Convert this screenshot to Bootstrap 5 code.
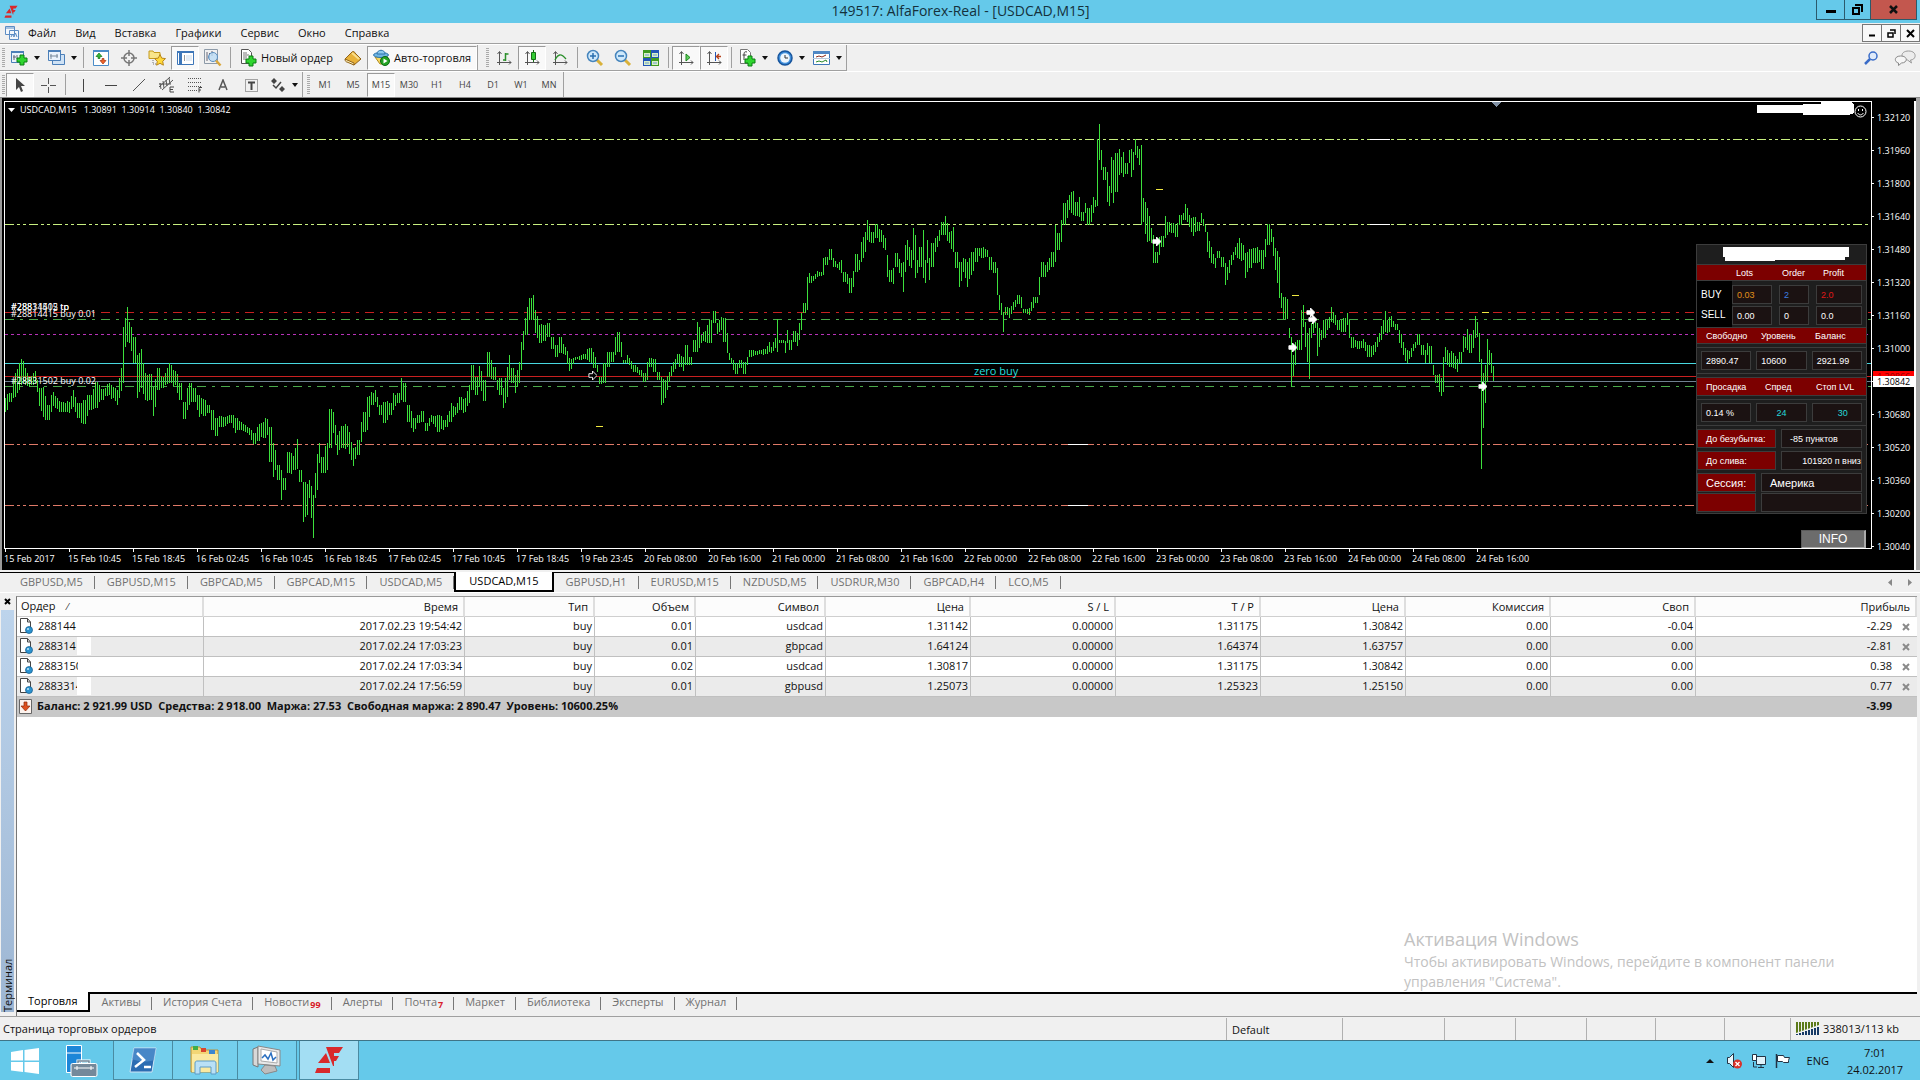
<!DOCTYPE html>
<html lang="ru">
<head>
<meta charset="utf-8">
<meta name="viewport" content="width=device-width, initial-scale=1">
<title>149517: AlfaForex-Real - [USDCAD,M15]</title>
<link rel="stylesheet" href="https://cdn.jsdelivr.net/npm/bootstrap@5.3.0/dist/css/bootstrap.min.css">
<style>
:root{--ui:#f0f0f0;--line:#a0a0a0;--sky:#65c9ea}
body{font-family:"Open Sans","Noto Sans",sans-serif;font-size:11px;line-height:16px;color:#111;background:var(--ui)}
button{font-family:inherit;padding:0;border:0;background:none;color:inherit}
a{color:inherit;text-decoration:none}
svg{display:block;flex:none}
/* title and menu */
.titlebar{background:var(--sky);height:23px;padding:0 3px 0 4px}
.titlebar h1{font-size:14px;line-height:22px;font-weight:400;margin:0;color:#14313c}
.tside{flex:1}
.winbtns button{height:20px;border:1px solid #2b5a6c;border-top:0;margin-left:-1px;display:flex;align-items:center;justify-content:center}
.winbtns .w-min{width:29px}.winbtns .w-max{width:27px}.winbtns .w-close{width:47px;background:#c3574e}
.menubar{height:21px;border-bottom:1px solid var(--line);padding-left:4px}
.menubar .nav-link{padding:0;margin-right:19px;color:#111;line-height:20px}
.mdi button{width:20px;height:18px;border:1px solid #777;background:#f8f8f8;margin-left:-1px;display:flex;align-items:center;justify-content:center}
/* toolbars */
.toolrow{height:27px;border-top:1px solid #fff}
.toolrow.second{border-bottom:1px solid #8b8b8b}
.tgroup{display:flex;align-items:center;height:26px;border-right:1px solid var(--line);border-bottom:1px solid var(--line)}
.second .tgroup{border-bottom:0;height:25px}
.grip{width:3px;height:19px;margin:0 1px 0 2px;background:repeating-linear-gradient(#aaa 0 1px,transparent 1px 2px)}
.tb{width:28px;height:24px;display:flex;align-items:center;justify-content:center;border:1px solid transparent;color:#444}
.tb.drop{width:37px;gap:6px}
.tb.wide{width:auto;padding:0 5px;gap:4px;color:#111}
.tb.on{background:#f9f9f9;border-color:#9a9a9a #fff #fff #9a9a9a}
.tf .tb{font-size:9px}
.caret{width:0;height:0;border:3px solid transparent;border-top:4px solid #111;border-bottom:0}
.tsep{width:1px;height:21px;background:var(--line);margin:0 3px}
/* chart */
.chart{background:#000;color:#fff;font-size:9px;line-height:12px;border-left:2px solid #9a9a9a;border-right:4px solid #a8a8a8;padding:3px 0 0 2px}
.chartinner{border-right:2px solid #fff}
.plot{border:1px solid #fff;overflow:hidden;flex:1}
.plot>svg{position:absolute;left:0;top:0;width:100%;height:100%}
.timeaxis{height:21px;overflow:hidden}
.timeaxis span{flex:0 0 64px;position:relative;padding-top:4px;white-space:nowrap}
.timeaxis span::before{content:"";position:absolute;left:1px;top:0;width:1px;height:3px;background:#fff}
.priceaxis{width:42px;padding-bottom:7px}
.priceaxis span{display:flex;height:33px;align-items:center}
.priceaxis span::before{content:"";width:2px;height:1px;background:#fff;margin-right:3px}
.tag{position:absolute;left:1px;right:0;height:11px;line-height:11px;padding-left:4px}
.tag.ask{top:270px;background:#f00;color:#8a0000}.tag.bid{top:275px;background:#fff;color:#000}
/* robot panel */
.robot{position:absolute;right:4px;top:142px;width:171px;font-family:"Liberation Sans",Arial,sans-serif;font-size:9px;line-height:12px}
.rbox{background:#1e1e1e;border:1px solid #3c3c3c}
.rtitle{height:19px;padding-left:8px}
.rhead{background:#7c0000;border:1px solid #3c3c3c;margin:0 -1px;height:17px;display:grid;grid-template-columns:55px 54px 1fr;padding-left:9px;align-items:center}
.rhead.sides{grid-template-columns:46px 41px 1fr;padding-left:39px}
.rhead.tall{height:19px;grid-template-columns:59px 51px 1fr}
.rlabels{width:35px;padding:4px 0 0 4px;font-size:10px;line-height:20px;background:#000}
.rsides{display:grid;flex:1;grid-template-columns:40px 30px 1fr;gap:2px 7px;padding:4px 4px 2px 0}
.cell{background:#1b1212;border:1px solid #3c3c3c;height:19px;display:flex;align-items:center;padding:0 4px;white-space:nowrap}
.cell.r{background:#7c0000;padding-left:8px}
.rgrid{display:grid;gap:5px;padding:0 4px}
.rgrid.three{grid-template-columns:1fr 1fr 1fr}
.rgrid.two{grid-template-columns:79px 1fr;padding-left:0;row-gap:3px}
.rgrid.sess{grid-template-columns:59px 1fr;padding:3px 4px 1px 0;row-gap:1px;font-size:11px}
.hr1{height:1px;background:#3c3c3c;margin:3px 0}
.orange{color:#e0901a}.blue{color:#3c7fe0}.redt{color:#e01818}.cyan{color:#25d8d8}
.infobtn{display:block;width:65px;height:19px;margin:16px 1px 0 auto;background:#6c6c6c;color:#fff;font-size:12px;line-height:16px;border:1px solid #5a5a5a;border-right:2px solid #aaa;border-bottom:2px solid #aaa}
/* chart tabs */
.ctabs{border-top:1px solid #000;height:20px;color:#707070;margin-top:2px}
.ctabs .nav-link{padding:0 12px;color:#707070;line-height:18px;height:19px;position:relative;font-size:11px}
.ctabs .nav-link:first-child{padding-left:20px}
.ctabs .nav-link::after{content:"";position:absolute;right:0;top:3px;height:13px;width:1px;background:#777}
.ctabs .nav-link.active{background:#fff;color:#000;border:solid #000;border-width:0 2px 2px 2px;margin-top:-1px;height:20px;padding:0 13px}
.ctabs .nav-link.active::after{display:none}
/* terminal */
.terminal{background:var(--ui);border-top:1px solid #fff}
.side{width:16px;padding:3px 2px 4px 1px}
.side button{height:10px;margin-bottom:4px}
.side .strip{background:linear-gradient(0deg,#bdd4ec,#9db6d3);writing-mode:vertical-rl;transform:rotate(180deg);font-size:11px;line-height:13px}
.tmain{border-left:1px solid #777;border-top:1px solid #999;margin-top:3px;margin-right:3px;min-width:0}
.tbody-area{background:#fff}
.orders{table-layout:fixed;margin:0;font-size:11px;line-height:16px;border-collapse:separate;border-spacing:0;color:#111}
.orders th,.orders td{padding:0 2px 0 4px;text-align:right;height:20px;border:0;border-right:1px solid #c0c0c0;border-bottom:1px solid #c0c0c0;line-height:18px;white-space:nowrap;color:#111}
.orders thead th{height:19px;font-weight:400;padding-right:5px;border-right:2px solid #dedede;border-bottom-color:#cfcfcf;background:#fcfcfc}
.orders th:first-child,.orders td:first-child{text-align:left}
.orders .alt td{background:#ebebeb}
.orders .sum td{background:#c8c8c8;border-color:#c8c8c8;font-weight:700}
.orders td:last-child{border-right:0}
.orders td.pr{padding-right:25px;position:relative}
.orders td.pr button{position:absolute;right:7px;top:6px;width:8px;height:8px}
.c-ord{width:187px}.c-time{width:261px}.c-type,.c-sym{width:130px}.c-vol{width:101px}.c-num{width:145px}
.ord{display:flex;align-items:center;gap:5px;height:18px}
.ord .num{width:40px;overflow:hidden}
.ord .blot{width:14px;height:18px;background:#fff;margin-left:-6px}
.ord svg{margin-left:-2px}
.watermark{position:absolute;left:1387px;bottom:0;color:#c2c2c2;font-size:14px;line-height:20px;white-space:nowrap}
.watermark strong{display:block;font-weight:400;font-size:18px;line-height:26px}
.btabs{border-top:2px solid #000;height:20px}
.btabs .nav-link{padding:0 11px;color:#707070;line-height:15px;height:18px;position:relative;display:flex}
.btabs .nav-link::after{content:"";position:absolute;right:0;top:3px;height:13px;width:1px;background:#777}
.btabs .nav-link.active{background:#fff;color:#000;border:solid #000;border-width:0 2px 2px 0;margin-top:-2px;height:20px;line-height:18px}
.btabs .nav-link.active::after{display:none}
.btabs .cnt{color:#d8202a;font-weight:700;font-size:9px;line-height:22px;margin-left:1px}
.tfoot-gap{height:4px}
/* status bar and taskbar */
.status{height:24px;border-top:1px solid var(--line);padding-left:3px;line-height:24px}
.status div{height:22px;border-left:1px solid #b0b0b0;padding-left:5px;line-height:24px}
.status .s1{width:116px}.status .s2{width:102px}.status .s3{width:71px}.status .s4{width:69px}.status .s5{width:66px}.status .s6{width:130px}
.taskbar{height:40px;background:var(--sky);border-top:1px solid #3f7487}
.taskbar .app{height:39px;width:60px;display:flex;align-items:center;justify-content:center}
.taskbar .start{width:50px}.taskbar .server{width:64px}.taskbar .files{width:66px}
.taskbar .frame{border:1px solid #4a8ba2;border-top:0;margin-left:-1px;background:#74cfed}
.taskbar .frame.active{background:#a3def3;margin-left:2px}
.tray{gap:8px;margin-right:7px}
.clock{width:76px;text-align:center;line-height:17px}
</style>
<script src="https://cdn.jsdelivr.net/npm/bootstrap@5.3.0/dist/js/bootstrap.bundle.min.js"></script>
</head>
<body class="d-flex flex-column min-vh-100">

<svg width="0" height="0" class="position-absolute">
  <defs>
    <symbol id="doc" viewBox="0 0 14 16"><path d="M1.500.5h7l3 3.500v10.500h-10z" fill="#fff" stroke="#444"/><path d="M8.500.5v3.500h3" fill="none" stroke="#444"/><circle cx="10" cy="12" r="3.500" fill="#2b93cf" stroke="#12598a" stroke-width=".7"/><circle cx="9" cy="11" r="1" fill="#bfe6fa"/></symbol>
    <symbol id="xx" viewBox="0 0 8 8"><path d="M1 1l6 6M7 1l-6 6" stroke="#8a8a8a" stroke-width="2"/></symbol>
    <symbol id="af" viewBox="0 0 30 29"><path d="M12 1h17l-4 6h-5v3h5l-3 5h-2v5h-1z" fill="#d8292b"/><path d="M12 7l4 10H4zM3 22h13v5H1z" fill="#d8292b"/></symbol>
    <symbol id="axes" viewBox="0 0 16 16"><path d="M3.500 2v13M1 12.500h14M1.500 4l2-2.500 2 2.500M13 10.500l2 2-2 2" stroke="#555" fill="none"/></symbol>
    <symbol id="plus" viewBox="0 0 12 12"><path d="M4 1h4v3h3v4H8v3H4V8H1V4h3z" fill="#2fd52f" stroke="#0b7d12"/></symbol>
    <symbol id="tail" viewBox="0 0 10 10"><path d="M1 3h4V0l5 5-5 5V7H1z"/></symbol>
  </defs>
</svg>

<header class="titlebar d-flex">
  <div class="tside d-flex align-items-center"><svg width="14" height="14"><use href="#af"/></svg></div>
  <h1>149517: AlfaForex-Real - [USDCAD,M15]</h1>
  <div class="tside winbtns d-flex justify-content-end">
    <button class="w-min" aria-label="Свернуть"><svg width="10" height="10"><path d="M0 6.500h10" stroke="#000" stroke-width="3"/></svg></button>
    <button class="w-max" aria-label="Развернуть"><svg width="11" height="11"><path d="M3 1h7v7M1 4h6v6H1z" fill="none" stroke="#000" stroke-width="2"/></svg></button>
    <button class="w-close" aria-label="Закрыть"><svg width="9" height="9"><path d="M1 1l7 7M8 1L1 8" stroke="#111" stroke-width="2.500"/></svg></button>
  </div>
</header>

<div class="menubar d-flex align-items-center">
  <svg width="16" height="16" class="me-2"><path d="M1.500 1.500h9v8h-9zM5.500 5.500h9v9h-9z" fill="#f4f8fd" stroke="#5c8cc4"/><path d="M1 3h10" stroke="#5c8cc4"/><path d="M7 12l1.500-3 1.500 3 1.500-4 1.500 4" fill="none" stroke="#5c8cc4"/></svg>
  <nav class="nav flex-nowrap">
    <a class="nav-link" href="#">Файл</a><a class="nav-link" href="#">Вид</a><a class="nav-link" href="#">Вставка</a><a class="nav-link" href="#">Графики</a><a class="nav-link" href="#">Сервис</a><a class="nav-link" href="#">Окно</a><a class="nav-link" href="#">Справка</a>
  </nav>
  <div class="mdi d-flex ms-auto">
    <button aria-label="Свернуть окно"><svg width="8" height="8"><path d="M1 6.500h6" stroke="#000" stroke-width="2"/></svg></button>
    <button aria-label="Восстановить окно"><svg width="9" height="9"><path d="M3 1h5v4M1 4h5v4H1z" fill="none" stroke="#000" stroke-width="1.500"/></svg></button>
    <button aria-label="Закрыть окно"><svg width="9" height="9"><path d="M1 1l7 7M8 1L1 8" stroke="#000" stroke-width="2"/></svg></button>
  </div>
</div>

<div class="toolrow d-flex justify-content-between">
  <div class="d-flex">
    <div class="tgroup">
      <i class="grip"></i>
      <button class="tb drop" aria-label="Новый график"><svg width="18" height="18"><path d="M1.500 2.500h12v11h-12z" fill="#eaf3fc" stroke="#4b7fb8"/><path d="M1 3h13" stroke="#4b7fb8" stroke-width="2"/><path d="M4 6v5M7 6v4M3 8h3" stroke="#667"/><use href="#plus" x="6" y="5" width="12" height="12"/></svg><i class="caret"></i></button>
      <button class="tb drop" aria-label="Профили"><svg width="18" height="18"><path d="M5.500 5.500h12v10h-12z" fill="#cfe2f5" stroke="#4b7fb8"/><path d="M1.500 1.500h12v10h-12z" fill="#eaf3fc" stroke="#4b7fb8"/><path d="M1 2h13" stroke="#4b7fb8" stroke-width="2"/><path d="M4 5v5M10 5v4M3 7h8" stroke="#789"/></svg><i class="caret"></i></button>
      <i class="tsep"></i>
      <button class="tb" aria-label="Обзор рынка"><svg width="16" height="16"><path d="M.5.5h15v15H.5z" fill="#fff" stroke="#4b8cc8"/><path d="M0 1h16" stroke="#4b8cc8" stroke-width="2"/><path d="M6 3L3 6.500h2v2h2v-2h2z" fill="#39b839" stroke="#17751c" stroke-width=".7"/><path d="M10 14l-3-3.500h2v-2h2v2h2z" fill="#f0652c" stroke="#a33512" stroke-width=".7"/></svg></button>
      <button class="tb" aria-label="Окно данных"><svg width="16" height="16"><circle cx="8" cy="8" r="5" fill="none" stroke="#777" stroke-width="1.500"/><path d="M8 0v6M8 10v6M0 8h6M10 8h6" stroke="#777" stroke-width="1.500"/></svg></button>
      <button class="tb" aria-label="Навигатор"><svg width="18" height="17"><path d="M1 2h4l1 1.500h6v6H1z" fill="#f9e58a" stroke="#c49a1e"/><path d="M5 11v4h4" stroke="#777" fill="none" stroke-dasharray="1 1"/><path d="M12 5.500l1.700 3.600 3.800.5-2.800 2.700.7 3.900-3.400-1.900-3.400 1.900.7-3.900L6.500 9.600l3.800-.5z" fill="#ffd93b" stroke="#b8861b"/></svg></button>
      <button class="tb on" aria-label="Терминал"><svg width="17" height="16"><path d="M.5 1.500h16v13H.5z" fill="#fff" stroke="#3d76b8"/><path d="M0 2h17" stroke="#3d76b8" stroke-width="2"/><path d="M3.500 3v11" stroke="#3d76b8" stroke-width="3"/><path d="M7 6h1M7 8h1M7 10h1" stroke="#333"/><path d="M9 6h6M9 8h6M9 10h6" stroke="#c8d8ea"/></svg></button>
      <button class="tb" aria-label="Тестер стратегий"><svg width="18" height="18"><path d="M.5.5h13v14H.5z" fill="#f1f1f1" stroke="#8d9aa8"/><path d="M3 3v9M5.500 4v6M8 2v5" stroke="#667"/><circle cx="9" cy="8" r="4.500" fill="#bcdcf5" fill-opacity=".8" stroke="#5c8fc0"/><path d="M12 11.500l4.500 5" stroke="#d9a63a" stroke-width="2.500"/></svg></button>
      <i class="tsep"></i>
      <button class="tb wide"><svg width="17" height="18"><path d="M1.500.5h7l3 3v11h-10z" fill="#fff" stroke="#555"/><path d="M3 4h4M3 6h6M3 8h4M3 10h3" stroke="#777"/><use href="#plus" x="5" y="6" width="12" height="12"/></svg>Новый ордер</button>
      <button class="tb" aria-label="MetaEditor"><svg width="18" height="16"><path d="M1 9l7-7c1-1 3 0 3 1l6 6-7 6z" fill="#e8b23a" stroke="#91631a"/><path d="M1 9c0 2 1 3 2 3l7 3v-2z" fill="#fff1b5" stroke="#91631a"/><path d="M8 3l7 6" stroke="#f9de8c" stroke-width="2"/></svg></button>
      <button class="tb wide on"><svg width="17" height="17"><path d="M2 8h13l-5 7H7z" fill="#f5d661" stroke="#b08c1f"/><ellipse cx="8" cy="6" rx="7.500" ry="2.500" fill="#6fb5e3" stroke="#2e75ab"/><path d="M4 5c0-5 8-5 8 0z" fill="#8ccaf0" stroke="#2e75ab"/><circle cx="12" cy="12" r="4.500" fill="#24a324" stroke="#0b6a14"/><path d="M10.500 9.500v5l4-2.500z" fill="#fff"/></svg>Авто-торговля</button>
    </div>
    <div class="tgroup">
      <i class="grip ms-2"></i>
      <button class="tb" aria-label="Бары"><svg width="16" height="16"><use href="#axes"/><path d="M9.500 3v8M9.500 4h3M7 10h2.500" stroke="#2a8f2a" fill="none" stroke-width="1.500"/></svg></button>
      <button class="tb on" aria-label="Свечи"><svg width="16" height="16"><use href="#axes"/><path d="M9.500 0v12" stroke="#166e16"/><path d="M7.500 2.500h4v7h-4z" fill="#33cc33" stroke="#166e16"/></svg></button>
      <button class="tb" aria-label="Линия"><svg width="16" height="16"><use href="#axes"/><path d="M3 10c3-6 6-7 11-1" stroke="#2a8f2a" fill="none" stroke-width="1.300"/></svg></button>
      <i class="tsep"></i>
      <button class="tb" aria-label="Увеличить"><svg width="18" height="18"><path d="M10 10l6 6" stroke="#d9b13a" stroke-width="3"/><circle cx="7" cy="7" r="5.500" fill="#cfe9fb" stroke="#4685bd" stroke-width="1.500"/><path d="M7 4v6M4 7h6" stroke="#2a6fb0" stroke-width="1.500"/></svg></button>
      <button class="tb" aria-label="Уменьшить"><svg width="18" height="18"><path d="M10 10l6 6" stroke="#d9b13a" stroke-width="3"/><circle cx="7" cy="7" r="5.500" fill="#cfe9fb" stroke="#4685bd" stroke-width="1.500"/><path d="M4 7h6" stroke="#2a6fb0" stroke-width="1.500"/></svg></button>
      <button class="tb" aria-label="Расположить окна"><svg width="16" height="16"><path d="M0 0h8v8H0zM8 8h8v8H8z" fill="#3f9a22"/><path d="M8 0h8v8H8zM0 8h8v8H0z" fill="#2356b8"/><path d="M1 3h6v4H1zM9 3h6v4H9zM1 11h6v4H1zM9 11h6v4H9z" fill="#d9f0c8"/><path d="M2 5h4M10 5h4M2 13h4M10 13h4" stroke="#6a9ad0"/></svg></button>
      <i class="tsep"></i>
      <button class="tb on" aria-label="Автопрокрутка"><svg width="16" height="16"><use href="#axes"/><path d="M8 4l4 3.500-4 3.500z" fill="#5fd05f" stroke="#1d861d"/></svg></button>
      <button class="tb on" aria-label="Сдвиг графика"><svg width="16" height="16"><use href="#axes"/><path d="M9.500 2v9" stroke="#2356b8"/><path d="M15 6.500h-4m2-2.500l-2.500 2.500L13 9" stroke="#b5401a" fill="none" stroke-width="1.300"/></svg></button>
      <i class="tsep"></i>
      <button class="tb drop" aria-label="Индикаторы"><svg width="17" height="18"><path d="M1.500.5h7l3 3v11h-10z" fill="#fff" stroke="#777"/><path d="M8 3c-3-1-3 1-3 4v4M3.500 6h4" stroke="#444" fill="none"/><use href="#plus" x="5" y="6" width="12" height="12"/></svg><i class="caret"></i></button>
      <button class="tb drop" aria-label="Периоды"><svg width="16" height="16"><circle cx="8" cy="8" r="7" fill="#3f8fdc" stroke="#16549c" stroke-width="1.500"/><circle cx="8" cy="8" r="4.800" fill="#eef6fd"/><path d="M8 5v3h3" stroke="#333" fill="none"/></svg><i class="caret"></i></button>
      <button class="tb drop" aria-label="Шаблоны"><svg width="17" height="16"><path d="M.5 1.500h16v13H.5z" fill="#fff" stroke="#3d76b8"/><path d="M0 2.500h17" stroke="#4f87c4" stroke-width="3"/><path d="M0 8.500h17" stroke="#b8c8da"/><path d="M3 7l3-1 3 1 4-2" stroke="#8a2a1a" fill="none"/><path d="M3 12l3-1 3 1 4-2 1 2" stroke="#2a8a2a" fill="none"/></svg><i class="caret"></i></button>
    </div>
  </div>
  <div class="d-flex align-items-center gap-3 me-1">
    <button aria-label="Поиск"><svg width="14" height="14"><circle cx="9" cy="5" r="4" fill="#dfeafa" stroke="#3a6cc8" stroke-width="1.500"/><path d="M6 8l-5 5" stroke="#3a6cc8" stroke-width="2.500"/></svg></button>
    <button aria-label="Чат"><svg width="22" height="16"><path d="M14.500 1c9 0 8 9 2 9l1 3-4-3C6 9 6 1 14.500 1z" fill="#ececec" stroke="#999"/><path d="M6.500 6c8 0 7 7 1 7l-3 2.500V13C0 12 0 6 6.500 6z" fill="#f6f6f6" stroke="#888"/></svg></button>
  </div>
</div>

<div class="toolrow second d-flex">
  <div class="tgroup">
    <i class="grip"></i>
    <button class="tb on" aria-label="Курсор"><svg width="12" height="16"><path d="M2 1v12l3-3 2 5 2-1-2-5h4z" fill="#444"/></svg></button>
    <button class="tb" aria-label="Перекрестие"><svg width="16" height="16"><path d="M8.500 1v6M8.500 10v6M1 8.500h6M10 8.500h6" stroke="#555"/></svg></button>
    <i class="tsep"></i>
    <button class="tb" aria-label="Вертикальная линия"><svg width="16" height="16"><path d="M8.500 2v13" stroke="#444"/></svg></button>
    <button class="tb" aria-label="Горизонтальная линия"><svg width="14" height="16"><path d="M1 8.500h12" stroke="#444"/></svg></button>
    <button class="tb" aria-label="Трендовая линия"><svg width="14" height="14"><path d="M1 13L13 1" stroke="#555"/></svg></button>
    <button class="tb" aria-label="Канал"><svg width="18" height="18"><path d="M1 11L12 1M4 14L15 4M2 7l1 6M5 5l1 7M8 4l1 6M11 2l1 6M1 8l12 0" stroke="#555" fill="none"/><path d="M16 11h-4v5h4M12 13.500h3" stroke="#444" fill="none"/></svg></button>
    <button class="tb" aria-label="Фибоначчи"><svg width="18" height="18"><path d="M2 2.500h14M2 6.500h14M2 10.500h14M2 14.500h9" stroke="#555" stroke-dasharray="1 1"/><path d="M16 11.500h-3v5M13 14h2" stroke="#444" fill="none"/></svg></button>
    <button class="tb" aria-label="Текст"><svg width="12" height="12"><path d="M2 11L6 1l4 10M4 8h4" stroke="#555" fill="none" stroke-width="1.500"/></svg></button>
    <button class="tb" aria-label="Метка"><svg width="16" height="16"><path d="M2.500 2.500h12v12h-12z" fill="none" stroke="#555" stroke-dasharray="1 1"/><path d="M5 5.500h7M8.500 5v8" stroke="#444" stroke-width="2"/></svg></button>
    <button class="tb drop" aria-label="Стрелки"><svg width="16" height="16"><path d="M4 1l3 3-3 3-3-3zM12 9l3 3-3 3-3-3z" fill="#444"/><path d="M3 8l3 3 5-6" stroke="#444" fill="none" stroke-width="1.500"/></svg><i class="caret"></i></button>
  </div>
  <div class="tgroup tf">
    <i class="grip ms-1"></i>
    <button class="tb">M1</button><button class="tb">M5</button><button class="tb on">M15</button><button class="tb">M30</button><button class="tb">H1</button><button class="tb">H4</button><button class="tb">D1</button><button class="tb">W1</button><button class="tb">MN</button>
  </div>
</div>

<section class="chart">
  <div class="chartinner d-flex">
    <div class="d-flex flex-column flex-grow-1 overflow-hidden">
      <div class="plot position-relative">
        <svg id="plot" aria-label="График USDCAD">
          <g transform="translate(-5,-102)" shape-rendering="crispEdges">
            <g id="levels" fill="none"></g>
            <path id="bars" stroke="#3ce03c" fill="none"/>
            <path d="M1370 139.500h20M1370 224.500h20M1068 444.500h20M1068 505.500h20" stroke="#fff"/>
            <path d="M596 426.500h7M1156 189.500h7M1292 295.500h7M1482 312.500h7" stroke="#f0e840"/>
            <path d="M1491 102h10l-5 5z" fill="#8090a4"/>
            <path d="M1757 105h46v8h-46zM1803 104h18v-2h30l3 2v9l-5 2h-46z" fill="#fff"/>
          </g>
          <g transform="translate(-5,-102)" fill="#fff" stroke="#fff">
            <use href="#tail" x="588" y="371" width="9" height="9" fill="#000"/>
            <use href="#tail" x="1152" y="237" width="9" height="9"/>
            <use href="#tail" x="1288" y="343" width="9" height="9"/>
            <use href="#tail" x="1306" y="308" width="9" height="9"/>
            <use href="#tail" x="1308" y="315" width="9" height="9"/>
            <use href="#tail" x="1478" y="382" width="9" height="9"/>
            <circle cx="1860.500" cy="111.500" r="5.500" fill="none"/>
            <path d="M1858.500 109v2M1862.500 109v2M1857.500 113c2 2.500 4 2.500 6 0" fill="none"/>
            <path d="M8 108h7l-3.500 4z" stroke="none"/>
          </g>
          <g transform="translate(-5,-102)" fill="#fff">
            <text x="20" y="113">USDCAD,M15&#160;&#160; 1.30891&#160; 1.30914&#160; 1.30840&#160; 1.30842</text>
            <text x="11" y="310">#28814415 tp</text><text x="11" y="310">#28831502 tp</text>
            <text x="11" y="317">#28814415 buy 0.01</text>
            <text x="11" y="384">#28831502 buy 0.02</text>
            <text x="974" y="375" fill="#29dede" font-size="11">zero buy</text>
          </g>
        </svg>
        <div class="robot">
          <div class="rbox">
            <div class="rtitle d-flex justify-content-center"><svg width="128" height="16"><path d="M1 2h126v10h-4v3H53v1H3v-4H1z" fill="#fff"/></svg></div>
            <div class="rhead sides"><span>Lots</span><span>Order</span><span>Profit</span></div>
            <div class="d-flex">
              <div class="rlabels d-flex flex-column"><span>BUY</span><span>SELL</span></div>
              <div class="rsides">
                <div class="cell orange">0.03</div><div class="cell blue">2</div><div class="cell redt">2.0</div>
                <div class="cell">0.00</div><div class="cell">0</div><div class="cell">0.0</div>
              </div>
            </div>
            <div class="rhead"><span>Свободно</span><span>Уровень</span><span>Баланс</span></div>
            <div class="hr1"></div>
            <div class="rgrid three"><div class="cell">2890.47</div><div class="cell">10600</div><div class="cell">2921.99</div></div>
            <div class="hr1"></div>
            <div class="rhead tall"><span>Просадка</span><span>Спред</span><span>Стоп LVL</span></div>
            <div class="hr1"></div>
            <div class="rgrid three"><div class="cell">0.14 %</div><div class="cell cyan justify-content-center">24</div><div class="cell cyan justify-content-center ps-3">30</div></div>
            <div class="hr1"></div>
            <div class="rgrid two">
              <div class="cell r">До безубытка:</div><div class="cell ps-2">-85 пунктов</div>
              <div class="cell r">До слива:</div><div class="cell justify-content-end pe-0">101920 п вниз</div>
            </div>
            <div class="rgrid sess">
              <div class="cell r">Сессия:</div><div class="cell ps-2">Америка</div>
              <div class="cell r"></div><div class="cell"></div>
            </div>
          </div>
          <button class="infobtn">INFO</button>
        </div>
      </div>
      <div class="timeaxis d-flex">
        <span>15 Feb 2017</span><span>15 Feb 10:45</span><span>15 Feb 18:45</span><span>16 Feb 02:45</span><span>16 Feb 10:45</span><span>16 Feb 18:45</span><span>17 Feb 02:45</span><span>17 Feb 10:45</span><span>17 Feb 18:45</span><span>19 Feb 23:45</span><span>20 Feb 08:00</span><span>20 Feb 16:00</span><span>21 Feb 00:00</span><span>21 Feb 08:00</span><span>21 Feb 16:00</span><span>22 Feb 00:00</span><span>22 Feb 08:00</span><span>22 Feb 16:00</span><span>23 Feb 00:00</span><span>23 Feb 08:00</span><span>23 Feb 16:00</span><span>24 Feb 00:00</span><span>24 Feb 08:00</span><span>24 Feb 16:00</span>
      </div>
    </div>
    <div class="priceaxis position-relative">
      <span>1.32120</span><span>1.31960</span><span>1.31800</span><span>1.31640</span><span>1.31480</span><span>1.31320</span><span>1.31160</span><span>1.31000</span><span></span><span>1.30680</span><span>1.30520</span><span>1.30360</span><span>1.30200</span><span>1.30040</span>
      <div class="tag ask">1.30866</div><div class="tag bid">1.30842</div>
    </div>
  </div>
</section>

<nav class="nav flex-nowrap ctabs">
  <a class="nav-link" href="#">GBPUSD,M5</a><a class="nav-link" href="#">GBPUSD,M15</a><a class="nav-link" href="#">GBPCAD,M5</a><a class="nav-link" href="#">GBPCAD,M15</a><a class="nav-link" href="#">USDCAD,M5</a><a class="nav-link active" href="#">USDCAD,M15</a><a class="nav-link" href="#">GBPUSD,H1</a><a class="nav-link" href="#">EURUSD,M15</a><a class="nav-link" href="#">NZDUSD,M5</a><a class="nav-link" href="#">USDRUR,M30</a><a class="nav-link" href="#">GBPCAD,H4</a><a class="nav-link" href="#">LCO,M5</a>
  <div class="ms-auto d-flex align-items-center gap-3 me-2"><svg width="4" height="7"><path d="M4 0v7L0 3.500z" fill="#888"/></svg><svg width="4" height="7"><path d="M0 0v7l4-3.500z" fill="#888"/></svg></div>
</nav>

<section class="terminal d-flex flex-grow-1">
  <div class="side d-flex flex-column">
    <button aria-label="Закрыть терминал"><svg width="7" height="7" class="mx-auto"><path d="M1 1l5 5M6 1L1 6" stroke="#000" stroke-width="2"/></svg></button>
    <div class="strip flex-grow-1">Терминал</div>
  </div>
  <div class="tmain d-flex flex-column flex-grow-1">
    <div class="tbody-area flex-grow-1 position-relative">
      <table class="table orders">
        <colgroup><col class="c-ord"><col class="c-time"><col class="c-type"><col class="c-vol"><col class="c-sym"><col class="c-num"><col class="c-num"><col class="c-num"><col class="c-num"><col class="c-num"><col class="c-num"><col></colgroup>
        <thead><tr><th>Ордер &nbsp; &nbsp;<small>⁄</small></th><th>Время</th><th>Тип</th><th>Объем</th><th>Символ</th><th>Цена</th><th>S / L</th><th>T / P</th><th>Цена</th><th>Комиссия</th><th>Своп</th><th>Прибыль</th></tr></thead>
        <tbody>
          <tr><td><div class="ord"><svg width="14" height="16"><use href="#doc"/></svg><span class="num">288144</span></div></td><td>2017.02.23 19:54:42</td><td>buy</td><td>0.01</td><td>usdcad</td><td>1.31142</td><td>0.00000</td><td>1.31175</td><td>1.30842</td><td>0.00</td><td>-0.04</td><td class="pr">-2.29<button aria-label="Закрыть ордер"><svg width="8" height="8"><use href="#xx"/></svg></button></td></tr>
          <tr class="alt"><td><div class="ord"><svg width="14" height="16"><use href="#doc"/></svg><span class="num">288314</span><i class="blot"></i></div></td><td>2017.02.24 17:03:23</td><td>buy</td><td>0.01</td><td>gbpcad</td><td>1.64124</td><td>0.00000</td><td>1.64374</td><td>1.63757</td><td>0.00</td><td>0.00</td><td class="pr">-2.81<button aria-label="Закрыть ордер"><svg width="8" height="8"><use href="#xx"/></svg></button></td></tr>
          <tr><td><div class="ord"><svg width="14" height="16"><use href="#doc"/></svg><span class="num">2883150</span></div></td><td>2017.02.24 17:03:34</td><td>buy</td><td>0.02</td><td>usdcad</td><td>1.30817</td><td>0.00000</td><td>1.31175</td><td>1.30842</td><td>0.00</td><td>0.00</td><td class="pr">0.38<button aria-label="Закрыть ордер"><svg width="8" height="8"><use href="#xx"/></svg></button></td></tr>
          <tr class="alt"><td><div class="ord"><svg width="14" height="16"><use href="#doc"/></svg><span class="num">2883314</span><i class="blot"></i></div></td><td>2017.02.24 17:56:59</td><td>buy</td><td>0.01</td><td>gbpusd</td><td>1.25073</td><td>0.00000</td><td>1.25323</td><td>1.25150</td><td>0.00</td><td>0.00</td><td class="pr">0.77<button aria-label="Закрыть ордер"><svg width="8" height="8"><use href="#xx"/></svg></button></td></tr>
          <tr class="sum"><td colspan="11"><div class="ord"><svg width="13" height="15"><path d="M.5.5h12v14H.5z" fill="#fdf3ee" stroke="#666"/><path d="M5 3h3v4h3l-4.500 5L2 7h3z" fill="#e0501e" stroke="#8a2a0a" stroke-width=".7"/></svg><span>Баланс: 2 921.99 USD&nbsp; Средства: 2 918.00&nbsp; Маржа: 27.53&nbsp; Свободная маржа: 2 890.47&nbsp; Уровень: 10600.25%</span></div></td><td class="pr">-3.99</td></tr>
        </tbody>
      </table>
      <div class="watermark"><strong>Активация Windows</strong>Чтобы активировать Windows, перейдите в компонент панели<br>управления "Система".</div>
    </div>
    <nav class="nav btabs flex-nowrap">
      <a class="nav-link active" href="#">Торговля</a><a class="nav-link" href="#">Активы</a><a class="nav-link" href="#">История Счета</a><a class="nav-link" href="#">Новости<span class="cnt">99</span></a><a class="nav-link" href="#">Алерты</a><a class="nav-link" href="#">Почта<span class="cnt">7</span></a><a class="nav-link" href="#">Маркет</a><a class="nav-link" href="#">Библиотека</a><a class="nav-link" href="#">Эксперты</a><a class="nav-link" href="#">Журнал</a>
    </nav>
    <div class="tfoot-gap"></div>
  </div>
</section>

<footer class="status d-flex align-items-center">
  <span class="me-auto">Страница торговых ордеров</span>
  <div class="s1">Default</div><div class="s2"></div><div class="s3"></div><div class="s3"></div><div class="s4"></div><div class="s4"></div><div class="s5"></div>
  <div class="s6 d-flex align-items-center gap-1"><svg width="23" height="13"><path d="M0 6.500h23" stroke="#5c7a18" stroke-width="13" stroke-dasharray="2 1"/><path d="M0 11l23-8v10H0z" fill="#f0f0f0"/><path d="M1 13v-1M4 13v-2M7 13v-3M10 13V9M13 13V8M16 13V7M19 13V6M22 13V5" stroke="#173a66" stroke-width="2"/></svg>338013/113 kb</div>
</footer>

<footer class="taskbar d-flex">
  <button class="app start" aria-label="Пуск"><svg width="28" height="26"><path d="M0 4l12-2v10.500H0zM13.500 2L28 0v12.500H13.500zM0 14h12v10L0 22.500zM13.500 14H28v12l-14.500-2z" fill="#fff"/></svg></button>
  <button class="app server" aria-label="Диспетчер серверов"><svg width="34" height="34"><path d="M1.500 1.500h15v27h-15z" fill="#1d86d8" stroke="#fff"/><path d="M2 9h14" stroke="#fff"/><path d="M13 20v-3h11v3" fill="none" stroke="#fff" stroke-width="3"/><path d="M13 20v-3h11v3" fill="none" stroke="#6d8598" stroke-width="1.500"/><rect x="6" y="19.500" width="26" height="13" rx="1.500" fill="#74899a" stroke="#fff"/><path d="M9 24h20M12 22v4M26 22v4" stroke="#fff"/></svg></button>
  <button class="app frame" aria-label="PowerShell"><svg width="28" height="26"><path d="M5 1h22l-4 24H1z" fill="#2b6cb2" stroke="#cfe4f5"/><path d="M5 1h22l-2 12C16 16 8 14 3 12z" fill="#5b9ad6" fill-opacity=".6"/><path d="M8 6l7 7-9 7M15 20h7" stroke="#fff" stroke-width="2.500" fill="none"/></svg></button>
  <button class="app frame files" aria-label="Проводник"><svg width="32" height="30"><path d="M2 2h9l2 3h16v22H2z" fill="#f2d675" stroke="#b8923a"/><path d="M4 1h5v4H4z" fill="#3fae49"/><path d="M12 3h5v4h-5z" fill="#d8452e"/><path d="M20 5h6v4h-6z" fill="#3b86d0"/><path d="M3 9h26v18H3z" fill="#fae9a0"/><path d="M6 29V18c0-2 2-2 2-2h17s2 0 2 2v11h-5v-7H11v7z" fill="#b9e0f6" stroke="#5c9cc6"/></svg></button>
  <button class="app frame" aria-label="Монитор"><svg width="32" height="30"><path d="M2 4l5-2v20l-5-2z" fill="#d8d8d8" stroke="#777"/><path d="M7 1l22 4v16L7 19z" fill="#e8e8e8" stroke="#888"/><path d="M10 4l16 3v11L10 16z" fill="#fff" stroke="#aaa"/><path d="M11 13l3-3 3 4 3-6 2 7 3-3" fill="none" stroke="#2a6fc0" stroke-width="1.500"/><path d="M14 20l10 1 2 5-12 3-4-4z" fill="#bdbdbd" stroke="#888"/></svg></button>
  <button class="app frame active" aria-label="AlfaForex"><svg width="30" height="29"><use href="#af"/></svg></button>
  <div class="tray d-flex align-items-center ms-auto">
    <svg width="8" height="5" class="me-1"><path d="M0 5l4-4 4 4z" fill="#111"/></svg>
    <svg width="17" height="17"><path d="M1.500 5.500h2l4-4v14l-4-4h-2z" fill="#e9f6fb" stroke="#234"/><circle cx="11.500" cy="12" r="4.500" fill="#d8322a"/><path d="M9.500 10l4 4M13.500 10l-4 4" stroke="#fff" stroke-width="1.300"/></svg>
    <svg width="16" height="16"><path d="M5.500 3.500h9v8h-9z" fill="#dff2fa" stroke="#234"/><path d="M10 12v2M7 14.500h6M2.500 9v5H6" stroke="#234" fill="none"/><path d="M1.500 1.500h4v6h-4z" fill="#fff" stroke="#234"/></svg>
    <svg width="16" height="16" class="me-2"><path d="M1.500 1v14" stroke="#234" stroke-width="1.500"/><path d="M2.500 2.500h6l1 2h5l-1 3 0 2h-5l-1-1h-5z" fill="#fff" stroke="#234"/></svg>
    <span>ENG</span>
    <div class="clock"><div>7:01</div><div>24.02.2017</div></div>
  </div>
</footer>

<script>
// Price levels: y, colour, dash pattern
const levels = [
  [139,'#c8f080','9 3 3 3 3 3'],[224,'#c8f080','9 3 3 3 3 3'],[312,'#c82020','9 6 3 6'],[319,'#4aa84a','9 6 3 6'],
  [334,'#b832b8','3 3'],[363,'#48d8e0',''],[376,'#c82020',''],[381,'#708090',''],[386,'#4aa84a','9 6 3 6'],
  [444,'#e07a68','9 3 3 3 3 3'],[505,'#e07a68','9 3 3 3 3 3']];
document.getElementById('levels').innerHTML = levels.map(([y,c,d]) =>
  `<path d="M5 ${y}.5H6000" stroke="${c}" stroke-dasharray="${d || 'none'}"/>`).join('');

// Turning points of the bars: x, high, low
const pts = `5 398 412,10 393 402,15 373 397,21 359 385,23 361 383,29 377 387,35 371 383,39 388 406,43 387 417,48 405 420,53 392 406,61 402 412,69 402 413,73 390 407,78 403 418,84 400 424,90 395 410,96 382 408,102 389 400,109 383 395,117 390 405,121 368 391,123 327 383,125 318 347,127 307 342,129 322 343,134 337 363,137 355 398,141 349 388,145 373 400,151 374 400,153 387 416,158 368 390,163 377 388,169 363 383,175 371 385,180 383 400,184 402 419,189 383 405,194 388 402,199 395 417,208 405 413,212 410 430,216 418 436,220 416 427,230 415 423,235 418 433,241 422 430,249 428 435,254 433 444,261 423 437,267 419 435,270 427 462,272 443 477,275 450 470,278 465 480,280 470 500,284 478 490,288 452 473,293 456 470,297 439 469,300 470 482,303 482 522,307 484 515,309 480 498,313 495 538,315 473 498,317 454 490,319 443 463,322 457 473,327 443 470,330 409 448,333 412 433,337 435 455,342 426 448,347 426 447,351 442 460,353 448 466,358 440 455,360 422 442,364 412 432,366 397 430,371 392 405,375 390 402,380 405 415,384 402 423,390 403 415,392 393 410,398 393 403,400 378 400,404 383 402,408 405 422,413 418 432,418 415 423,422 411 422,426 423 431,431 415 422,438 415 432,445 420 427,451 403 422,455 407 415,460 397 410,465 398 412,469 385 403,472 365 390,476 377 395,479 366 387,484 380 401,488 352 377,494 367 380,496 380 390,500 378 395,503 388 408,507 367 397,509 355 380,512 368 383,515 375 393,519 362 383,521 342 370,525 318 335,527 307 335,530 298 320,533 295 320,535 310 333,539 325 343,544 325 341,549 323 337,552 337 349,556 345 357,560 337 353,565 347 355,569 358 371,575 357 360,584 354 359,589 348 362,593 352 368,597 365 372,600 377 384,604 363 383,607 352 367,612 352 362,615 337 355,618 332 352,620 342 357,624 360 363,627 355 363,633 365 372,637 367 373,
641 370 377,644 373 382,647 362 380,650 358 367,654 359 372,658 372 380,661 377 405,665 380 398,669 372 382,673 362 372,677 354 363,683 357 371,686 345 365,690 357 365,694 340 352,697 322 352,701 335 343,705 331 342,710 320 343,714 311 323,717 323 334,721 317 330,724 318 342,726 333 353,729 353 360,733 360 370,736 363 374,740 360 368,744 362 374,747 357 365,750 350 357,756 351 355,765 349 354,769 342 352,771 347 353,775 338 348,777 319 352,779 340 343,782 340 343,785 341 353,787 330 343,790 340 350,794 331 342,797 333 346,799 323 340,801 313 330,804 303 313,806 277 310,808 273 283,813 276 281,817 271 277,820 272 276,822 258 275,826 257 265,830 249 260,833 258 267,837 264 268,841 260 273,844 272 282,847 274 284,850 278 293,853 271 287,856 254 272,859 260 270,861 242 262,865 232 252,867 220 240,872 232 243,876 224 238,881 230 242,885 238 250,887 255 277,890 270 282,893 268 284,896 253 267,901 263 277,903 262 292,905 245 272,907 240 260,911 250 268,913 228 260,915 235 278,917 260 273,920 247 267,923 230 278,925 260 283,927 240 263,929 258 280,932 243 267,934 238 252,937 236 247,942 222 235,945 216 235,949 232 243,953 227 252,956 252 268,959 262 287,963 258 272,967 262 287,971 252 275,976 248 262,979 248 256,983 247 258,987 250 257,990 257 270,994 262 273,996 268 295,998 295 310,1001 303 315,1003 312 332,1006 307 315,1009 308 318,1013 302 310,1018 295 304,1021 297 308,1024 309 313,1029 308 315,1033 297 308,1036 297 303,1039 277 295,1042 262 277,1045 265 277,1049 258 270,1052 252 267,1055 225 262,1058 233 250,1060 220 242,
1064 203 225,1069 195 210,1073 191 215,1076 202 216,1079 197 217,1082 212 221,1084 203 213,1088 208 225,1091 205 222,1094 197 213,1095 200 207,1097 139 206,1099 124 160,1101 150 170,1104 167 180,1106 172 202,1109 186 206,1111 157 193,1113 160 203,1116 153 192,1118 149 175,1121 157 173,1123 152 177,1126 163 174,1129 150 163,1131 149 177,1133 152 170,1135 139 155,1139 149 165,1141 145 225,1143 198 222,1147 208 242,1151 228 243,1153 235 263,1156 252 263,1159 237 255,1162 236 247,1164 216 238,1167 222 235,1172 223 233,1177 223 237,1180 215 225,1183 213 220,1185 204 220,1189 215 227,1193 217 236,1198 222 231,1201 213 223,1205 225 232,1207 232 252,1211 247 263,1215 258 268,1218 251 258,1222 257 267,1224 263 285,1227 267 280,1231 255 265,1235 247 255,1239 238 259,1243 245 260,1245 253 278,1250 249 268,1254 248 263,1259 250 262,1262 250 269,1264 239 257,1268 224 245,1271 229 242,1275 248 270,1279 257 298,1281 293 308,1284 297 319,1286 299 319,1288 311 342,1289 328 338,1291 337 387,1293 355 376,1295 342 365,1298 340 350,1301 310 350,1303 305 327,1305 322 347,1307 333 362,1309 328 379,1311 323 338,1315 322 328,1317 323 356,1321 330 340,1324 320 338,1329 317 328,1331 307 322,1335 315 325,1338 320 330,1344 318 332,1347 313 325,1349 320 338,1352 337 348,1358 341 349,1363 339 348,1368 345 357,1373 345 355,1377 337 347,1381 326 340,1385 311 332,1387 320 333,1391 316 327,1396 324 330,1399 330 343,1403 342 355,1407 350 363,1411 348 357,1415 342 348,1418 334 345,1422 345 355,1424 350 363,1426 343 355,1430 346 363,1432 365 375,1436 375 383,1439 374 392,1441 378 396,1443 357 392,1445 347 362,1449 353 367,1453 353 368,1457 359 372,1460 352 363,1462 336 352,1465 337 348,1467 329 350,1470 335 353,1473 330 348,1475 316 338,1477 322 337,1479 333 362,1481 359 469,1483 373 428,1485 365 403,1487 339 382,1489 350 365,1491 353 373,1493 366 381`
  .split(',').map(s => s.trim().split(' ').map(Number));
let seed = 7, k = 0, d = '';
const rnd = () => (seed = (seed * 16807) % 2147483647) / 2147483647;
for (let x = 5; x <= 1493; x += 2) {
  while (k < pts.length - 2 && pts[k + 1][0] <= x) k++;
  const a = pts[k], b = pts[k + 1], t = (x - a[0]) / (b[0] - a[0]);
  let hi = a[1] + (b[1] - a[1]) * t, lo = a[2] + (b[2] - a[2]) * t;
  const near = x - a[0] < 1.5 ? a : b[0] - x < 1.5 ? b : null;
  if (near) { hi = near[1]; lo = near[2]; }
  else { const j = Math.min(5, (lo - hi) / 3); hi += (rnd() - .5) * j; lo += (rnd() - .5) * j; }
  d += `M${x}.5 ${Math.round(hi)}V${Math.round(lo)}`;
}
document.getElementById('bars').setAttribute('d', d);
</script>
</body>
</html>
